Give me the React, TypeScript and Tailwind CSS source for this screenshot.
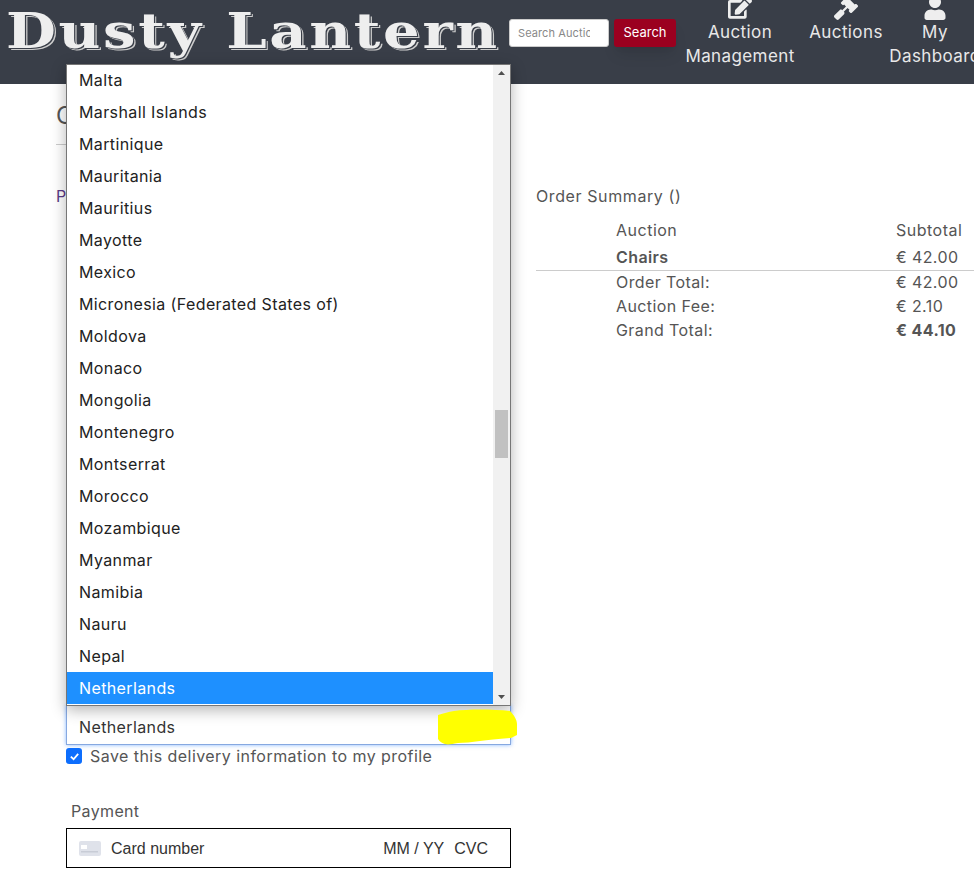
import { FaEdit, FaGavel, FaUser } from "react-icons/fa"

const countries = [
  "Malta",
  "Marshall Islands",
  "Martinique",
  "Mauritania",
  "Mauritius",
  "Mayotte",
  "Mexico",
  "Micronesia (Federated States of)",
  "Moldova",
  "Monaco",
  "Mongolia",
  "Montenegro",
  "Montserrat",
  "Morocco",
  "Mozambique",
  "Myanmar",
  "Namibia",
  "Nauru",
  "Nepal",
  "Netherlands",
]

function NavItem({ icon, lines, width }: { icon: React.ReactNode; lines: string[]; width: string }) {
  return (
    <div className={`flex flex-col items-center shrink-0 text-center text-[#e8e8e8] text-[17px] leading-6 tracking-[0.4px] ${width}`}>
      <div className="h-6 flex items-end justify-center text-[#eeeeee] text-2xl">{icon}</div>
      {lines.map((l) => (
        <span key={l} className="whitespace-nowrap">
          {l}
        </span>
      ))}
    </div>
  )
}

function Navbar() {
  return (
    <div className="h-[84px] bg-[#393e48] flex items-start shrink-0 overflow-hidden">
      <div className="ml-[6px] mt-[3px] w-[494px] shrink-0 whitespace-nowrap origin-left scale-x-[1.2] font-['DejaVu_Serif',serif] font-bold text-[48px] leading-[56px] tracking-[2.2px] text-[#eeeeee] [text-shadow:1px_1px_0_#393e48,2px_2px_0_#cccccc]">
        Dusty Lantern
      </div>
      <input
        readOnly
        placeholder="Search Auctions"
        className="ml-[9px] mt-[19px] w-[100px] h-[28px] shrink-0 bg-white rounded-[3px] border border-[#ccc] pl-[8px] pr-[18px] text-[11px] tracking-[0.1px] placeholder:text-[#888]"
      />
      <button className="ml-[5px] mt-[19px] w-[62px] h-[28px] shrink-0 bg-[#9b001f] rounded-[3px] text-white text-[13px] shadow-lg">
        Search
      </button>
      <div className="flex -mt-[4px] ml-[9px]">
        <NavItem icon={<FaEdit />} lines={["Auction", "Management"]} width="w-[110px]" />
        <NavItem icon={<FaGavel />} lines={["Auctions"]} width="w-[102px]" />
        <NavItem icon={<FaUser />} lines={["My", "Dashboard"]} width="w-[76px]" />
      </div>
    </div>
  )
}

function CountryPopup() {
  return (
    <div className="absolute left-[66px] top-[64px] w-[445px] h-[642px] bg-white border border-[#767676] shadow-[0_4px_14px_rgba(0,0,0,0.3)] flex text-[#222] z-10">
      <ul className="flex-1 -mt-px">
        {countries.map((c) => (
          <li
            key={c}
            className={`h-8 leading-8 pl-[12px] tracking-[0.38px] ${c === "Netherlands" ? "bg-[#1e90ff] text-white" : ""}`}
          >
            {c}
          </li>
        ))}
      </ul>
      <div className="w-[17px] bg-[#f1f1f1] relative">
        <svg className="absolute left-[4px] top-[5px]" width="9" height="6" viewBox="0 0 9 6">
          <path d="M4.5 1 L8 5 L1 5 Z" fill="#505050" />
        </svg>
        <div className="absolute left-[2px] top-[345px] w-[13px] h-[48px] bg-[#c1c1c1]" />
        <svg className="absolute left-[4px] bottom-[5px]" width="9" height="6" viewBox="0 0 9 6">
          <path d="M1 1 L8 1 L4.5 5 Z" fill="#505050" />
        </svg>
      </div>
    </div>
  )
}

function Summary() {
  const rows = [
    ["Order Total:", "€ 42.00", false],
    ["Auction Fee:", "€ 2.10", false],
    ["Grand Total:", "€ 44.10", true],
  ] as const
  return (
    <div className="ml-[25px] flex-1 pt-[100px]">
      <div className="leading-6 tracking-[0.6px]">Order Summary ()</div>
      <div className="mt-[10px] pl-[80px] flex leading-6 tracking-[0.5px]">
        <span className="w-[280px]">Auction</span>
        <span>Subtotal</span>
      </div>
      <div className="pl-[80px] flex leading-[26px] h-[26px] border-b border-[#cccccc] mt-[2px] -mb-[1px] box-content tracking-[0.4px]">
        <span className="w-[280px] font-semibold">Chairs</span>
        <span>€ 42.00</span>
      </div>
      <div>
        {rows.map(([label, value, bold]) => (
          <div key={label} className="pl-[80px] flex leading-6 tracking-[0.4px]">
            <span className="w-[280px]">{label}</span>
            <span className={bold ? "font-bold" : ""}>{value}</span>
          </div>
        ))}
      </div>
    </div>
  )
}

function Scribble() {
  return (
    <svg className="absolute left-[438px] top-[709px] z-20" width="80" height="37" viewBox="0 0 80 37">
      <path
        d="M0 6 C6 4 10 3 16 2 C30 0 54 0 72 2 C76 6 79 11 79 15 L79 26 C77 27 75 28 73 29 C60 30 50 31 42 32 C34 33 26 34 20 34 C14 35 10 36 7 35 C4 34 2 33 0 30 Z"
        fill="#ffff00"
      />
    </svg>
  )
}

function Checkout() {
  return (
    <div className="w-[455px] shrink-0 ml-[56px]">
      <div className="h-[61px] flex items-end pb-[12px] border-b border-[#cccccc] text-2xl">Checkout</div>
      <div className="mt-[39px] leading-6 text-[#5b3a86]">Personal Details</div>
      <div className="ml-[10px] mt-[497px] w-[445px] h-[40px] border border-[#86a8e0] shadow-[0_0_4px_rgba(13,110,253,0.5)] bg-white pl-[12px] leading-[42px] tracking-[0.38px] text-[#333]">
        Netherlands
      </div>
      <label className="ml-[10px] flex items-center h-[22px] tracking-[0.45px] text-[#555]">
        <span className="w-4 h-4 rounded-[3px] bg-[#0d6efd] flex items-center justify-center mr-[8px]">
          <svg width="11" height="11" viewBox="0 0 12 12">
            <path d="M2 6.2 L5 9 L10 3.2" stroke="white" strokeWidth="2" fill="none" />
          </svg>
        </span>
        Save this delivery information to my profile
      </label>
      <div className="ml-[15px] mt-[32px] leading-6 tracking-[0.35px] text-[#555]">Payment</div>
      <div className="ml-[10px] mt-[5px] w-[445px] h-[40px] border border-black flex items-center pt-[1px] pl-[12px] pr-[22px] font-['Liberation_Sans',sans-serif] text-[#333]">
        <svg width="22" height="15" viewBox="0 0 22 15" className="mr-[10px]">
          <rect width="22" height="15" rx="2" fill="#dfe2ea" />
          <rect x="2" y="4" width="6" height="4" fill="#fff" />
          <rect x="2" y="10" width="17" height="1.5" fill="#c8ccd6" />
        </svg>
        <span>Card number</span>
        <span className="ml-auto">MM / YY</span>
        <span className="ml-[10px]">CVC</span>
      </div>
    </div>
  )
}

export default function App() {
  return (
    <div className="relative w-[974px] h-[879px] overflow-hidden bg-white font-['Inter',sans-serif] text-[#555]">
      <Navbar />
      <div className="flex">
        <Checkout />
        <Summary />
      </div>
      <CountryPopup />
      <Scribble />
    </div>
  )
}
